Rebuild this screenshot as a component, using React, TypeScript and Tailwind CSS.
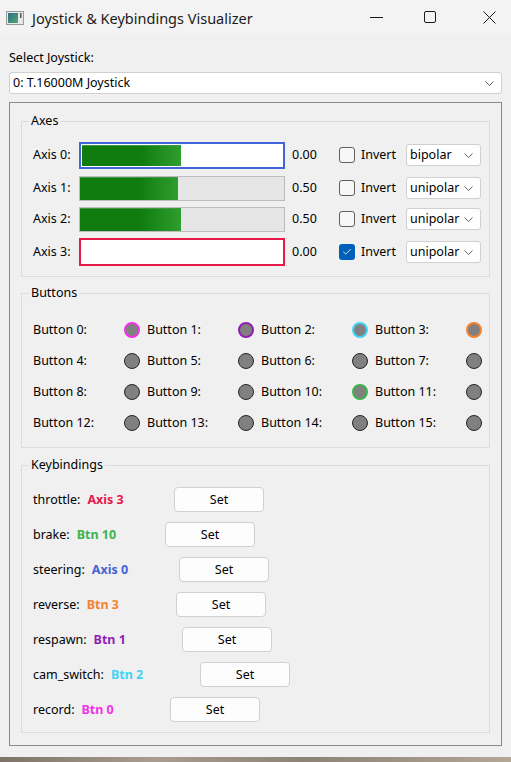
import { Check } from 'lucide-react';

type AxisRow = {
    label: string;
    value: string;
    fill: number;
    mode: string;
    inverted: boolean;
    highlight?: string;
    boxH: string;
    mt: string;
};

const axes: AxisRow[] = [
    { label: 'Axis 0:', value: '0.00', fill: 99, mode: 'bipolar', inverted: false, highlight: 'border-[#4363d8]', boxH: 'h-[27px]', mt: 'mt-0' },
    { label: 'Axis 1:', value: '0.50', fill: 98, mode: 'unipolar', inverted: false, boxH: 'h-[25px]', mt: 'mt-[3px]' },
    { label: 'Axis 2:', value: '0.50', fill: 101, mode: 'unipolar', inverted: false, boxH: 'h-[25px]', mt: 'mt-[1px]' },
    { label: 'Axis 3:', value: '0.00', fill: 0, mode: 'unipolar', inverted: true, highlight: 'border-[#e6194b]', boxH: 'h-[28px]', mt: 'mt-[3px]' },
];

// ring colour per button index, idle ones fall back to dark
const buttonRing: Record<number, string> = {
    0: 'border-[#f032e6] border-2',
    1: 'border-[#911eb4] border-2',
    2: 'border-[#42d4f4] border-2',
    3: 'border-[#f58231] border-2',
    10: 'border-[#3cb44b] border-2',
};

const bindings = [
    { name: 'throttle:', src: 'Axis 3', color: 'text-[#e6194b]', w: 'w-[141px]' },
    { name: 'brake:', src: 'Btn 10', color: 'text-[#3cb44b]', w: 'w-[132px]' },
    { name: 'steering:', src: 'Axis 0', color: 'text-[#4363d8]', w: 'w-[146px]' },
    { name: 'reverse:', src: 'Btn 3', color: 'text-[#f58231]', w: 'w-[143px]' },
    { name: 'respawn:', src: 'Btn 1', color: 'text-[#911eb4]', w: 'w-[149px]' },
    { name: 'cam_switch:', src: 'Btn 2', color: 'text-[#42d4f4]', w: 'w-[167px]' },
    { name: 'record:', src: 'Btn 0', color: 'text-[#f032e6]', w: 'w-[137px]' },
];

const Chevron = () => (
    <svg width="9" height="5" viewBox="0 0 9 5" className="shrink-0">
        <polyline points="0.5,0.5 4.5,4.5 8.5,0.5" fill="none" stroke="#5f5f5f" strokeWidth="1" />
    </svg>
);

const TitleBar = () => (
    <div className="flex h-[35px] items-center bg-[#f3f3f3]">
        <svg width="18" height="14" viewBox="0 0 18 14" className="ml-[6px]">
            <defs>
                <linearGradient id="ico" x1="0" y1="0" x2="1" y2="1">
                    <stop offset="0" stopColor="#2f6f8f" />
                    <stop offset="1" stopColor="#4ca86a" />
                </linearGradient>
            </defs>
            <rect x="0.5" y="0.5" width="17" height="13" fill="#e8e8e8" stroke="#9a9a9a" />
            <rect x="2" y="2" width="10" height="10" fill="url(#ico)" />
            <rect x="14" y="2" width="1.5" height="5" fill="#555" />
        </svg>
        <span className="ml-[8px] text-[14.5px] text-[#1a1a1a]">Joystick &amp; Keybindings Visualizer</span>
        <div className="flex-1" />
        <svg width="13" height="13" viewBox="0 0 13 13">
            <line x1="0" y1="6.5" x2="13" y2="6.5" stroke="#1a1a1a" strokeWidth="1" />
        </svg>
        <svg width="13" height="13" viewBox="0 0 13 13" className="ml-[41px]">
            <rect x="0.5" y="0.5" width="11" height="11" rx="1.5" fill="none" stroke="#1a1a1a" strokeWidth="1" />
        </svg>
        <svg width="13" height="13" viewBox="0 0 13 13" className="ml-[46px] mr-[15px]">
            <line x1="0.5" y1="0.5" x2="12.5" y2="12.5" stroke="#1a1a1a" strokeWidth="1" />
            <line x1="12.5" y1="0.5" x2="0.5" y2="12.5" stroke="#1a1a1a" strokeWidth="1" />
        </svg>
    </div>
);

const GroupBox = ({
    title,
    className,
    bodyClass,
    children,
}: {
    title: string;
    className?: string;
    bodyClass?: string;
    children: React.ReactNode;
}) => (
    <fieldset className={`border border-[#dcdcdc] ${className ?? ''}`}>
        <legend className="ml-[7px] px-[2px] leading-[16px]">{title}</legend>
        <div className={bodyClass}>{children}</div>
    </fieldset>
);

export default function App() {
    return (
        <div className="flex h-[762px] w-[511px] flex-col overflow-hidden bg-[#f0f0f0] font-['Noto_Sans',sans-serif] text-[12.5px] leading-[16px] text-black">
            <TitleBar />

            <div className="flex flex-1 flex-col px-[9px] pt-[15px]">
                <div className="leading-[16px]">Select Joystick:</div>
                <div className="mt-[6px] flex h-[22px] items-center justify-between rounded-[3px] border border-[#d0d0d0] bg-white pl-[3px] pr-[7px]">
                    <span>0: T.16000M Joystick</span>
                    <Chevron />
                </div>

                <div className="mt-[8px] border border-[#8a8a94] px-[11px] pt-[10px] pb-[12px]">
                    <GroupBox title="Axes" bodyClass="pl-[11px] pt-[11px] pb-[9px]">
                        {axes.map((a) => (
                            <div key={a.label} className={`flex h-[30px] items-center ${a.mt}`}>
                                <span className="w-[46px]">{a.label}</span>
                                <div
                                    className={`flex w-[206px] ${a.boxH} ${
                                        a.highlight ? `border-2 bg-white p-[1px] ${a.highlight}` : 'border border-[#bcbcbc] bg-[#e6e6e6]'
                                    }`}
                                >
                                    {a.fill > 0 && (
                                        <div
                                            className="h-full border-t border-[#3f9a3f] bg-[linear-gradient(to_right,#107c10_0%,#107c10_60%,#2e9e2e_100%)]"
                                            style={{ width: a.fill }}
                                        />
                                    )}
                                </div>
                                <span className="ml-[7px] w-[47px]">{a.value}</span>
                                {a.inverted ? (
                                    <div className="flex h-[16px] w-[16px] items-center justify-center rounded-[3px] bg-[#005fb8]">
                                        <Check className="h-[10px] w-[10px] text-white" strokeWidth={2} />
                                    </div>
                                ) : (
                                    <div className="h-[16px] w-[16px] rounded-[3px] border border-[#5f5f5f] bg-[#f7f7f7]" />
                                )}
                                <span className="ml-[6px] w-[45px]">Invert</span>
                                <div className="flex h-[22px] w-[75px] items-center justify-between rounded-[3px] border border-[#d0d0d0] bg-white pl-[3px] pr-[7px]">
                                    <span>{a.mode}</span>
                                    <Chevron />
                                </div>
                            </div>
                        ))}
                    </GroupBox>

                    <GroupBox title="Buttons" className="mt-[8px]" bodyClass="pl-[11px] pt-[13px] pb-[9px]">
                        <div className="grid grid-cols-[107px_107px_107px_107px] gap-x-[7px]">
                            {Array.from({ length: 16 }, (_, i) => (
                                <div key={i} className="flex h-[31px] items-center justify-between">
                                    <span>Button {i}:</span>
                                    <div
                                        className={`h-[16px] w-[16px] rounded-full bg-[#808080] ${
                                            buttonRing[i] ?? 'border-[1.5px] border-[#262626]'
                                        }`}
                                    />
                                </div>
                            ))}
                        </div>
                    </GroupBox>

                    <GroupBox title="Keybindings" className="mt-[9px]" bodyClass="flex flex-col gap-[10px] pl-[11px] pt-[14px] pb-[10px]">
                        {bindings.map((b) => (
                            <div key={b.name} className="flex h-[25px] items-center">
                                <div className={b.w}>
                                    {b.name}
                                    <span className={`ml-[7px] font-bold ${b.color}`}>{b.src}</span>
                                </div>
                                <button className="h-[25px] w-[90px] rounded-[4px] border border-[#d0d0d0] bg-[#fdfdfd]">Set</button>
                            </div>
                        ))}
                    </GroupBox>
                </div>
            </div>

            <div className="h-[5px] bg-[linear-gradient(to_right,#7d7368,#a89d8f_30%,#8c8276_60%,#b3a896)]" />
        </div>
    );
}
